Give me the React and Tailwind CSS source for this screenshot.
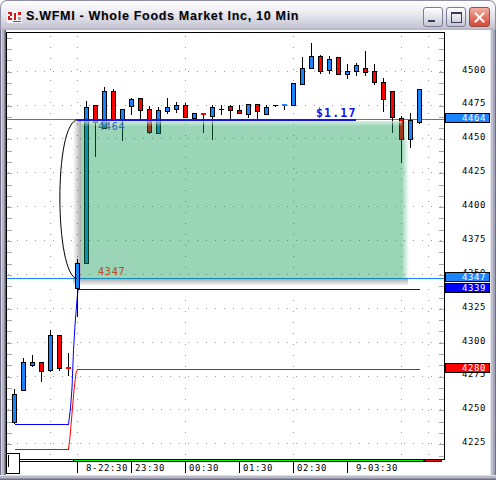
const BLUE = "#1a84ff";
const RED = "#ff0000";
const MONO = "'DejaVu Sans Mono', monospace";

// price -> pixel row (page coordinates)
const Y0 = 70.7;
const PX = 1.355;
const y = (p) => Y0 + (4500 - p) * PX;
const cx = (i) => 14 + 9 * i;

// open, high, low, close (10 min bars)
const candles = [
  [4240.5, 4265, 4239, 4261],
  [4264, 4288, 4264, 4285],
  [4282.8, 4290, 4281, 4284.8],
  [4285, 4285, 4270.5, 4278],
  [4278.6, 4308.6, 4278, 4304.7],
  [4304.7, 4305, 4278.6, 4280],
  [4281.1, 4292, 4275, 4280],
  [4339, 4361, 4318, 4358],
  [4358, 4477.4, 4358, 4473],
  [4474, 4474.7, 4436, 4461.6],
  [4457, 4488, 4457, 4485],
  [4485, 4486.5, 4464, 4464],
  [4463, 4471.7, 4448, 4471],
  [4473.4, 4480, 4467.3, 4479],
  [4479.6, 4479.6, 4464, 4470.5],
  [4471.5, 4474, 4453.3, 4454.2],
  [4453.5, 4473, 4453.5, 4470.3],
  [4469.7, 4479.6, 4468, 4473],
  [4471.5, 4476.7, 4468.6, 4474.5],
  [4474.5, 4476, 4465.6, 4465.6],
  [4464.9, 4468.6, 4464.9, 4468.6],
  [4468.6, 4468.6, 4453.7, 4467.6],
  [4466.2, 4474.5, 4449.2, 4473],
  [4471.5, 4474.5, 4467.3, 4471.5],
  [4473.7, 4474.5, 4464, 4470.5],
  [4470.8, 4474.5, 4468.4, 4468.4],
  [4468, 4474.7, 4465.3, 4474.7],
  [4474.7, 4474.7, 4464.6, 4469.7],
  [4468, 4474.7, 4468, 4473.2],
  [4474.5, 4474.5, 4473.2, 4474.5],
  [4473.7, 4474.7, 4471.2, 4474.7],
  [4474.2, 4490.7, 4474.2, 4490.7],
  [4489.8, 4510.1, 4489.8, 4501.8],
  [4501.6, 4520.2, 4501.6, 4510.6],
  [4510.8, 4511.6, 4497.2, 4499.3],
  [4500.3, 4510.8, 4497.2, 4508.4],
  [4509.9, 4509.9, 4497.2, 4497.2],
  [4497.3, 4504.9, 4494.2, 4499.6],
  [4499.6, 4505.5, 4496.1, 4503.5],
  [4501.8, 4514.5, 4496.1, 4498.8],
  [4499.6, 4504.9, 4489.4, 4491.1],
  [4491.4, 4494.4, 4469.7, 4478.9],
  [4484.8, 4484.8, 4454.2, 4465.5],
  [4464.7, 4466.3, 4432.1, 4449.4],
  [4449.4, 4469, 4443.3, 4463.4],
  [4461.9, 4486.3, 4460.3, 4486.3],
];

const axisLabels = [4500, 4475, 4450, 4425, 4400, 4375, 4350, 4325, 4300, 4275, 4250, 4225];
const gridX = [50, 77, 185, 293, 401, 428];
const timeTicks = [
  { x: 77, label: "8-22:30", dx: 9 },
  { x: 131, label: "23:30", dx: 4 },
  { x: 185, label: "00:30", dx: 4 },
  { x: 239, label: "01:30", dx: 4 },
  { x: 293, label: "02:30", dx: 4 },
  { x: 347, label: "9-03:30", dx: 9 },
];
const tags = [
  { p: 4464, fill: BLUE },
  { p: 4347, fill: BLUE },
  { p: 4339, fill: "#0000ff" },
  { p: 4280, fill: RED },
];

function Candle({ i, o, h, l, c }) {
  const x = cx(i);
  const top = y(Math.max(o, c));
  const bot = y(Math.min(o, c));
  const up = c > o;
  let body;
  if (o === c) {
    body = <rect x={x - 2} y={top - 0.5} width={5} height={1} fill="#000" />;
  } else if (bot - top < 1.8) {
    body = <rect x={x - 2} y={top - 0.5} width={5} height={2} fill={up ? BLUE : RED} />;
  } else {
    body = (
      <rect x={x - 1.5} y={top} width={4} height={bot - top} fill={up ? BLUE : RED} stroke="#000" />
    );
  }
  return (
    <g>
      <line x1={x + 0.5} x2={x + 0.5} y1={y(h)} y2={y(l)} stroke="#000" />
      {body}
    </g>
  );
}

function PriceChart() {
  const minor = [];
  for (let p = 4225 - 25; p <= 4525; p += 25 / 3) {
    const yy = y(p) + 1;
    if (yy > 33 && yy < 458) minor.push(Math.round(yy) + 0.5);
  }
  const y4464 = Math.round(y(4464)) + 0.5;
  const y4347 = Math.round(y(4347)) + 0.5;
  const y4339 = Math.round(y(4339)) + 0.5;
  const y4280 = Math.round(y(4280)) + 0.5;

  return (
    <svg width="484" height="445" viewBox="6 30 484 445" className="block" shapeRendering="crispEdges">
      <defs>
        <linearGradient id="shL" x1="0" x2="1" y1="0" y2="0">
          <stop offset="0" stopColor="#000" stopOpacity="0" />
          <stop offset="1" stopColor="#000" stopOpacity="0.32" />
        </linearGradient>
        <linearGradient id="shB" x1="0" x2="0" y1="0" y2="1">
          <stop offset="0" stopColor="#000" stopOpacity="0.32" />
          <stop offset="1" stopColor="#000" stopOpacity="0" />
        </linearGradient>
        <linearGradient id="boxFill" x1="0" x2="1" y1="0" y2="0">
          <stop offset="0" stopColor="#00964a" stopOpacity="0.4" />
          <stop offset="0.978" stopColor="#00964a" stopOpacity="0.4" />
          <stop offset="1" stopColor="#00964a" stopOpacity="0" />
        </linearGradient>
        <linearGradient id="topFade" x1="0" x2="0" y1="0" y2="1">
          <stop offset="0" stopColor="#fff" stopOpacity="0.65" />
          <stop offset="1" stopColor="#fff" stopOpacity="0" />
        </linearGradient>
      </defs>

      <rect x="6" y="30" width="484" height="445" fill="#fff" />

      {/* grid */}
      {axisLabels.map((p) => (
        <line key={p} x1="8" x2="443" y1={Math.round(y(p)) + 0.5} y2={Math.round(y(p)) + 0.5}
          stroke="#9c9c9c" strokeDasharray="1 8" />
      ))}
      {gridX.map((x) => (
        <line key={x} x1={x + 0.5} x2={x + 0.5} y1="36" y2="458" stroke="#9c9c9c" strokeDasharray="1 10" />
      ))}
      {minor.map((yy) => (
        <g key={yy}>
          <line x1="7" x2="12" y1={yy} y2={yy} stroke="#a8a8a8" />
          <line x1="439" x2="444" y1={yy} y2={yy} stroke="#a8a8a8" />
        </g>
      ))}

      {/* level lines */}
      <rect x="7" y={y4464 - 0.5} width="437" height="1" fill={BLUE} />
      <rect x="7" y={y4347 - 0.5} width="437" height="1" fill={BLUE} />

      {/* shadow of the measure box */}
      <rect x="73" y="121" width="8" height="158" fill="url(#shL)" />
      <rect x="73" y="279" width="335" height="7" fill="url(#shB)" />

      {/* stop lines */}
      <rect x="15" y="424" width="54" height="1" fill="#0000ff" />
      <polyline fill="none" stroke="#0000ff" shapeRendering="auto"
        points={`68.5,424.5 70.5,408 72,388 73.5,350 75,325 77,300 78,${y4339}`} />
      <rect x="78" y={y4339 - 0.5} width="342" height="1" fill="#0000f0" />
      <rect x="15" y="449" width="54" height="1" fill={RED} />
      <polyline fill="none" stroke={RED} shapeRendering="auto"
        points={`68.5,449.5 70,437 71.7,417 74,390 76,373 77.5,${y4280}`} />
      <rect x="77" y={y4280 - 0.5} width="343" height="1" fill={RED} />

      {candles.map(([o, h, l, c], i) => (
        <Candle key={i} i={i} o={o} h={h} l={l} c={c} />
      ))}

      {/* measure box */}
      <rect x="81" y={y4464 + 1} width="328" height={y4347 - y4464 - 1} fill="url(#boxFill)" />
      <rect x="81" y={y4464 + 1} width="321" height="6" fill="url(#topFade)" />
      <path d={`M78,${y4464} C53,122 55,276 77,${y4347}`} fill="none" stroke="#000" shapeRendering="auto" />
      <rect x="77" y={y4464 - 1} width="279" height="2" fill="#1414f0" />

      <text x="98" y="129.5" fill="#2f62c4" fontFamily={MONO} fontSize="10" letterSpacing="0.8">4464</text>
      <text x="98" y="275" fill="#c04428" fontFamily={MONO} fontSize="10" letterSpacing="0.8">4347</text>
      <text x="316" y="117" fill="#1010f0" fontFamily={MONO} fontSize="11.5" fontWeight="bold" letterSpacing="1.2">$1.17</text>

      {/* plot frame */}
      <rect x="6.5" y="32.5" width="438" height="427" fill="none" stroke="#000" />

      {/* price axis */}
      {axisLabels.map((p) => (
        <text key={p} x="486" y={y(p) + 1.8} textAnchor="end" fill="#000" fontFamily={MONO}
          fontSize="9" letterSpacing="0.6">{p}</text>
      ))}
      {tags.map((t) => {
        const ly = Math.round(y(t.p)) + 0.5;
        return (
          <g key={t.p}>
            <rect x="445.5" y={ly - 6.5} width="44" height="9" fill={t.fill} stroke="#000" />
            <text x="486" y={ly + 1.8} textAnchor="end" fill="#fff" fontFamily={MONO}
              fontSize="9" letterSpacing="0.6">{t.p}</text>
          </g>
        );
      })}

      {/* scroll strip + time axis */}
      <rect x="19.5" y="459.5" width="54" height="2" fill="#fff" stroke="#000" />
      <rect x="73.5" y="459.5" width="350" height="2" fill="#00ff00" stroke="#000" />
      <rect x="424.5" y="459.5" width="17" height="2" fill={RED} stroke="#000" />
      <rect x="6.5" y="453.5" width="13" height="20" fill="#fff" stroke="#000" />
      <line x1="8.5" x2="8.5" y1="455" y2="467" stroke="#000" />
      {timeTicks.map((t) => (
        <g key={t.x}>
          <line x1={t.x + 0.5} x2={t.x + 0.5} y1="462" y2="473" stroke="#000" />
          <text x={t.x + t.dx} y="471" fill="#000" fontFamily={MONO} fontSize="9" letterSpacing="0.6">{t.label}</text>
        </g>
      ))}
    </svg>
  );
}

function AppIcon() {
  return (
    <svg width="15" height="12" viewBox="0 0 15 12" shapeRendering="crispEdges">
      <rect x="0" y="0" width="15" height="12" fill="#f4f4f4" />
      <rect x="1" y="1" width="4" height="2" fill="#d81818" />
      <rect x="3" y="3" width="2" height="2" fill="#d81818" />
      <rect x="1" y="5" width="2" height="2" fill="#d81818" />
      <rect x="1" y="7" width="4" height="2" fill="#d81818" />
      <rect x="7" y="2" width="2" height="7" fill="#d81818" />
      <rect x="11" y="1" width="3" height="3" fill="#d81818" />
      <rect x="11" y="6" width="3" height="3" fill="#a0a0a8" />
      <rect x="6" y="10" width="8" height="1" fill="#c03030" />
    </svg>
  );
}

function TitleBar() {
  return (
    <div className="h-[30px] shrink-0 flex items-center pt-[2px] pl-[6px] pr-[5px] rounded-t-[7px] border-t border-x border-[#8e8ea4] bg-[linear-gradient(to_bottom,#ffffff_0%,#f0f0f5_30%,#dedee7_60%,#c4c4d3_92%,#b0b0c0_100%)]">
      <AppIcon />
      <span className="ml-[4px] text-[12.5px] font-bold text-black tracking-[0.7px] font-['Liberation_Sans',sans-serif] [text-shadow:1px_1px_0_#c8c8d4]">
        S.WFMI - Whole Foods Market Inc, 10 Min
      </span>
      <div className="ml-auto flex gap-[3px] mt-[1px]">
        <button className="relative w-[20px] h-[20px] rounded-[3px] border border-[#7d7d98] bg-[linear-gradient(to_bottom,#ffffff,#e2e2ea_55%,#c4c4d4)]">
          <span className="absolute left-[4px] top-[12px] w-[7px] h-[2px] bg-[#3a3a52]" />
        </button>
        <button className="relative w-[20px] h-[20px] rounded-[3px] border border-[#7d7d98] bg-[linear-gradient(to_bottom,#ffffff,#e2e2ea_55%,#c4c4d4)]">
          <span className="absolute left-[4px] top-[4px] w-[11px] h-[11px] border border-t-2 border-[#3a3a52]" />
        </button>
        <button className="relative w-[21px] h-[20px] rounded-[3px] border border-[#a04a44] bg-[linear-gradient(to_bottom,#f4b0a4,#e07868_50%,#cc4c3c)] flex items-center justify-center">
          <svg width="11" height="11" viewBox="0 0 11 11">
            <path d="M1.5 1.5 L9.5 9.5 M9.5 1.5 L1.5 9.5" stroke="#fff" strokeWidth="2" strokeLinecap="square" />
          </svg>
        </button>
      </div>
    </div>
  );
}

export default function App() {
  return (
    <div className="w-[496px] h-[480px] flex flex-col bg-white overflow-hidden">
      <TitleBar />
      <div className="flex flex-1 min-h-0">
        <div className="w-[6px] bg-[linear-gradient(to_right,#6e6e84_0px,#6e6e84_1px,#d6d6e0_1px,#d6d6e0_2px,#b6b6c6_2px,#b6b6c6_4px,#8e8ea2_4px,#8e8ea2_5px,#5c5c6c_5px)]" />
        <div className="flex-1 bg-white">
          <PriceChart />
        </div>
        <div className="w-[6px] bg-[linear-gradient(to_right,#e4e4ec_0px,#e4e4ec_1px,#c0c0ce_1px,#c0c0ce_3px,#a4a4b8_3px,#a4a4b8_5px,#6e6e84_5px)]" />
      </div>
      <div className="h-[5px] shrink-0 bg-[linear-gradient(to_bottom,#e0e0e8_0px,#e0e0e8_1px,#b8b8c8_1px,#b8b8c8_3px,#9494a8_3px,#9494a8_4px,#6e6e84_4px)]" />
    </div>
  );
}
